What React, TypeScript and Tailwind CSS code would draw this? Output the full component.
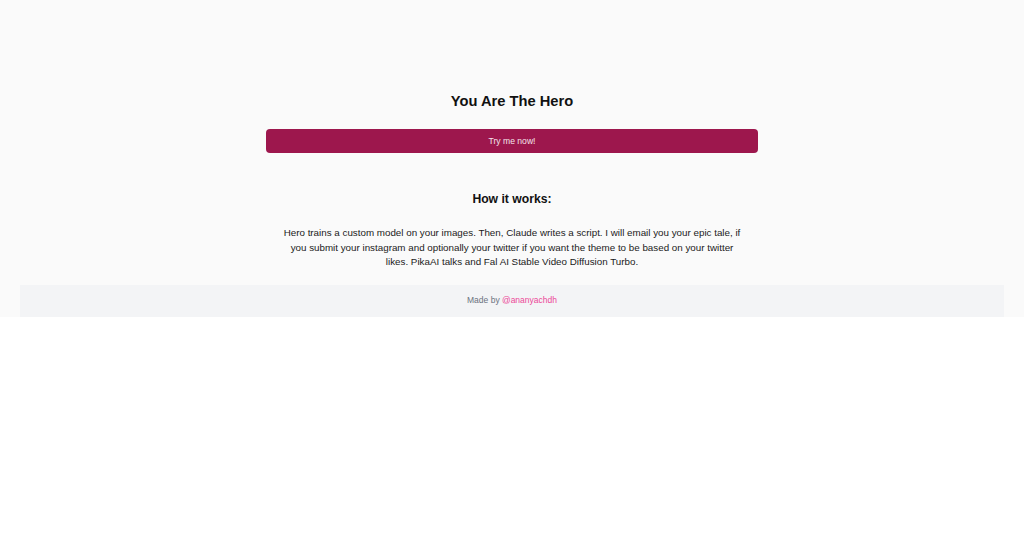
export default function App() {
  return (
    <div className="bg-[#fafafa] font-['Liberation_Sans',Arial,sans-serif]">
      <main className="flex flex-col items-center pt-[91px]">
        <h1 className="text-[14.7px] leading-[20px] font-bold text-[#111]">You Are The Hero</h1>

        <button className="mt-[18px] w-[492px] h-[24px] rounded-[4px] bg-[#9d174d] text-[8.6px] text-[#f3e3ea]">
          Try me now!
        </button>

        <h2 className="mt-[37px] text-[12.2px] leading-[18px] font-bold text-[#111]">How it works:</h2>

        <p className="mt-[18px] w-[462px] text-center text-[9.8px] leading-[14.5px] text-[#1a1a1a]">
          Hero trains a custom model on your images. Then, Claude writes a script. I will email you your epic
          tale, if you submit your instagram and optionally your twitter if you want the theme to be based on
          your twitter likes. PikaAI talks and Fal AI Stable Video Diffusion Turbo.
        </p>
      </main>

      <footer className="mx-[20px] mt-[15px] h-[32px] flex items-center justify-center bg-[#f3f4f6] text-[8.5px] text-[#6b7280]">
        <span>
          Made by <a className="text-[#ec4899]">@ananyachdh</a>
        </span>
      </footer>
    </div>
  );
}
